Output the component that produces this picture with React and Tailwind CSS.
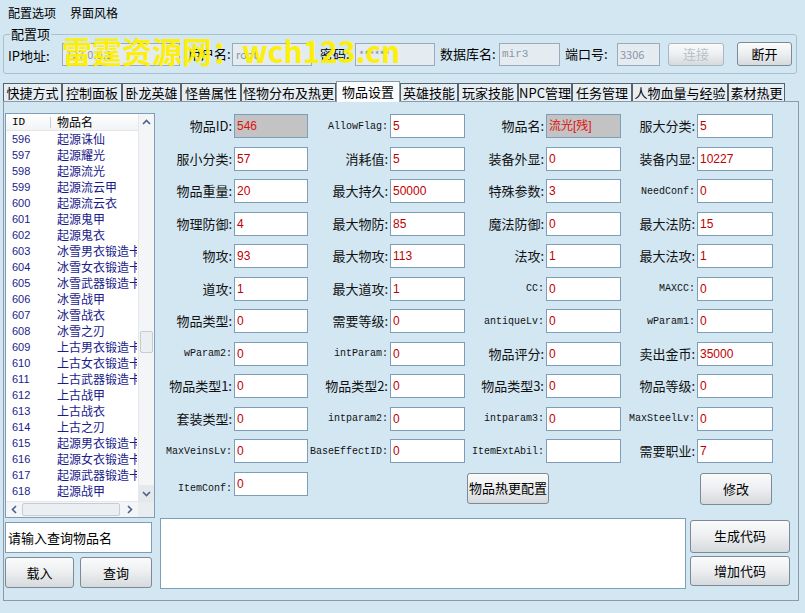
import React from 'react';

const cjk = "font-['Noto_Sans_CJK_SC','Noto_Sans',sans-serif]";
const mono = "font-['Liberation_Mono','Noto_Sans_CJK_SC',monospace]";

const tabs = [
    ['快捷方式', 59], ['控制面板', 60], ['卧龙英雄', 59], ['怪兽属性', 60], ['怪物分布及热更', 95],
    ['物品设置', 64], ['英雄技能', 58], ['玩家技能', 60], ['NPC管理', 54], ['任务管理', 60],
    ['人物血量与经验', 96], ['素材热更', 57],
];

const items = [
    ['596', '起源诛仙'], ['597', '起源耀光'], ['598', '起源流光'], ['599', '起源流云甲'], ['600', '起源流云衣'],
    ['601', '起源鬼甲'], ['602', '起源鬼衣'], ['603', '冰雪男衣锻造卡'], ['604', '冰雪女衣锻造卡'], ['605', '冰雪武器锻造卡'],
    ['606', '冰雪战甲'], ['607', '冰雪战衣'], ['608', '冰雪之刃'], ['609', '上古男衣锻造卡'], ['610', '上古女衣锻造卡'],
    ['611', '上古武器锻造卡'], ['612', '上古战甲'], ['613', '上古战衣'], ['614', '上古之刃'], ['615', '起源男衣锻造卡'],
    ['616', '起源女衣锻造卡'], ['617', '起源武器锻造卡'], ['618', '起源战甲'], ['619', '起源战衣'],
];

// [label, value, mono?, gray?]
const rows = [
    [['物品ID:', '546', 0, 1], ['AllowFlag:', '5', 1], ['物品名:', '流光[残]', 0, 1], ['服大分类:', '5']],
    [['服小分类:', '57'], ['消耗值:', '5'], ['装备外显:', '0'], ['装备内显:', '10227']],
    [['物品重量:', '20'], ['最大持久:', '50000'], ['特殊参数:', '3'], ['NeedConf:', '0', 1]],
    [['物理防御:', '4'], ['最大物防:', '85'], ['魔法防御:', '0'], ['最大法防:', '15']],
    [['物攻:', '93'], ['最大物攻:', '113'], ['法攻:', '1'], ['最大法攻:', '1']],
    [['道攻:', '1'], ['最大道攻:', '1'], ['CC:', '0', 1], ['MAXCC:', '0', 1]],
    [['物品类型:', '0'], ['需要等级:', '0'], ['antiqueLv:', '0', 1], ['wParam1:', '0', 1]],
    [['wParam2:', '0', 1], ['intParam:', '0', 1], ['物品评分:', '0'], ['卖出金币:', '35000']],
    [['物品类型1:', '0'], ['物品类型2:', '0'], ['物品类型3:', '0'], ['物品等级:', '0']],
    [['套装类型:', '0'], ['intparam2:', '0', 1], ['intparam3:', '0', 1], ['MaxSteelLv:', '0', 1]],
    [['MaxVeinsLv:', '0', 1], ['BaseEffectID:', '0', 1], ['ItemExtAbil:', '', 1], ['需要职业:', '7']],
];

const Btn = ({ children, className = '', disabled }) => (
    <button className={`rounded-[3px] border border-[#7b8a96] bg-gradient-to-b from-[#fbfbfb] via-[#eceef0] to-[#d6dadd] text-[13px] ${cjk} ${disabled ? 'text-[#b8c2ca] border-[#aab6c0]' : 'text-black'} ${className}`}>
        {children}
    </button>
);

const Field = ({ label, value, isMono, gray }) => (
    <>
        <div className={`flex items-center justify-end pr-[2px] text-[#111] whitespace-nowrap ${isMono ? `${mono} text-[10px]` : `${cjk} text-[13px]`}`}>{label}</div>
        <div className={`h-[24px] border border-[#7f9db9] flex items-center pl-[2px] text-[12px] text-[#c00000] font-['Liberation_Sans','Noto_Sans_CJK_SC',sans-serif] ${gray ? 'bg-[#c3c3c3] text-[#e01010]' : 'bg-white'}`}>{value}</div>
    </>
);

const Arrow = ({ d }) => (
    <svg width="9" height="9" viewBox="0 0 9 9"><path d={d} fill="none" stroke="#4d6185" strokeWidth="1.6" /></svg>
);

const App = () => {
    return (
        <div className={`relative w-[805px] h-[613px] overflow-hidden bg-[#d3e7f3] ${cjk}`}>
            {/* menu */}
            <div className="h-[25px] flex items-center gap-[14px] px-[8px] text-[12px] text-black">
                <span>配置选项</span>
                <span>界面风格</span>
            </div>

            {/* config group */}
            <div className="relative mx-[3px] mt-[9px] mr-[8px] h-[40px] border border-[#a9c0d0] rounded-[3px] flex items-center px-[4px] text-[13px] text-black">
                <span className="absolute left-[6px] top-[-11px] bg-[#d3e7f3] px-[1px] text-[13px]">配置项</span>
                <span className="w-[54px] mt-[3px]">IP地址:</span>
                <div className="w-[118px] h-[23px] border border-[#9aaab8] bg-[#e4ecf2] text-[11px] text-[#8a97a4] pl-[3px] flex items-center">127.0.0.1</div>
                <span className="ml-[8px] w-[44px]">用户名:</span>
                <div className="w-[80px] h-[23px] border border-[#9aaab8] bg-[#e4ecf2] text-[11px] text-[#8a97a4] pl-[3px] flex items-center">root</div>
                <span className="ml-[8px] w-[35px]">密码:</span>
                <div className="w-[80px] h-[23px] border border-[#9aaab8] bg-[#e4ecf2] text-[11px] text-[#8a97a4] pl-[3px] flex items-center">******</div>
                <span className="ml-[5px] w-[59px]">数据库名:</span>
                <div className={`w-[61px] h-[23px] border border-[#9aaab8] bg-[#e4ecf2] text-[11px] text-[#8a97a4] pl-[2px] flex items-center ${mono}`}>mir3</div>
                <span className="ml-[5px] w-[52px]">端口号:</span>
                <div className="w-[43px] h-[23px] border border-[#9aaab8] bg-[#e4ecf2] text-[11px] text-[#8a97a4] pl-[2px] flex items-center">3306</div>
                <Btn disabled className="ml-[8px] w-[56px] h-[23px]">连接</Btn>
                <Btn className="ml-[13px] w-[55px] h-[24px]">断开</Btn>
            </div>

            {/* tabs */}
            <div className="mt-[8px] ml-[3px] flex items-end h-[19px]">
                {tabs.map(([t, w]) => {
                    const sel = t === '物品设置';
                    return (
                        <div key={t} style={{ width: w }}
                            className={`flex items-center justify-center border border-b-0 text-[13px] text-black whitespace-nowrap ${sel ? 'h-[21px] bg-[#fbfcfd] border-[#8a9aa8] relative z-10 -mb-[1px]' : 'h-[18px] bg-[#e6eef4] border-[#56626c]'}`}>
                            {t}
                        </div>
                    );
                })}
            </div>

            {/* panel */}
            <div className="ml-[3px] mr-[6px] h-[500px] border border-[#8a9aa8] bg-[#d3e7f3] flex">
                {/* left column */}
                <div className="w-[152px] pl-[1px] pt-[11px] flex flex-col">
                    <div className="relative w-[150px] h-[405px] border border-[#7f9db9] bg-white overflow-hidden">
                        <div className="h-[17px] flex items-center text-[12px] text-black border-b border-[#e2e6ea] bg-gradient-to-b from-white to-[#f1f3f5]">
                            <span className={`w-[44px] shrink-0 pl-[6px] ${mono} text-[11px]`}>ID</span>
                            <span className="w-px h-[11px] bg-[#c8cdd2]" />
                            <span className="pl-[6px]">物品名</span>
                        </div>
                        <div className="w-[131px] overflow-hidden">
                            {items.map(([id, n]) => (
                                <div key={id} className="h-[16px] flex items-center text-[#1a1a8c] whitespace-nowrap">
                                    <span className="w-[51px] shrink-0 pl-[6px] text-[11px] font-['Liberation_Sans',sans-serif]">{id}</span>
                                    <span className="text-[12px]">{n}</span>
                                </div>
                            ))}
                        </div>
                        {/* vertical scrollbar */}
                        <div className="absolute right-0 top-0 w-[16px] h-[388px] bg-[#f3f5f7] border-l border-[#e4e8ec] flex flex-col items-center">
                            <div className="h-[17px] w-full flex items-center justify-center"><Arrow d="M1 6 L4.5 2.5 L8 6" /></div>
                            <div className="flex-1 w-full relative">
                                <div className="absolute left-[1px] right-[1px] top-[200px] h-[22px] rounded-[2px] border border-[#c5ccd3] bg-[#eceff2]" />
                            </div>
                            <div className="h-[17px] w-full flex items-center justify-center bg-[#e5e9ed]"><Arrow d="M1 3 L4.5 6.5 L8 3" /></div>
                        </div>
                        {/* horizontal scrollbar */}
                        <div className="absolute left-0 bottom-0 w-full h-[16px] bg-[#f3f5f7] border-t border-[#e4e8ec] flex items-center">
                            <div className="w-[16px] flex justify-center"><Arrow d="M6 1 L2.5 4.5 L6 8" /></div>
                            <div className="w-[98px] h-[13px] rounded-[2px] border border-[#c5ccd3] bg-[#eceff2]" />
                            <div className="flex-1 flex justify-center"><Arrow d="M3 1 L6.5 4.5 L3 8" /></div>
                            <div className="w-[16px] h-full bg-[#e9edf0]" />
                        </div>
                    </div>
                    <div className="mt-[4px] w-[147px] h-[31px] border border-[#7f9db9] bg-white flex items-center pl-[2px] text-[13px] text-black">请输入查询物品名</div>
                    <div className="mt-[4px] flex gap-[6px]">
                        <Btn className="w-[69px] h-[31px]">载入</Btn>
                        <Btn className="w-[72px] h-[31px]">查询</Btn>
                    </div>
                </div>

                {/* form */}
                <div className="flex-1 pt-[12px] pl-[4px] flex flex-col">
                    <div className="grid grid-cols-[74px_74px_82px_75px_81px_75px_76px_76px] gap-y-[8.5px]">
                        {rows.map((r, i) => r.map(([l, v, m, g], j) => (
                            <Field key={`${i}-${j}`} label={l} value={v} isMono={m} gray={g} />
                        )))}
                        <Field label="ItemConf:" value="0" isMono />
                        <div />
                        <div />
                        <div className="col-span-2 flex items-start pl-[2px]">
                            <Btn className="w-[82px] h-[31px] mt-[1px]">物品热更配置</Btn>
                        </div>
                        <div className="col-span-2 flex justify-end pr-[1px]">
                            <Btn className="w-[72px] h-[32px] mt-[1px]">修改</Btn>
                        </div>
                    </div>
                    <div className="mt-[13px] flex gap-[4px]">
                        <div className="w-[526px] h-[71px] border border-[#7f9db9] bg-white" />
                        <div className="flex flex-col gap-[3px] pt-[2px]">
                            <Btn className="w-[100px] h-[33px]">生成代码</Btn>
                            <Btn className="w-[100px] h-[30px]">增加代码</Btn>
                        </div>
                    </div>
                </div>
            </div>

            {/* watermark */}
            <div className="absolute left-[62px] top-[28px] text-[30px] font-bold text-[#fff000] whitespace-nowrap tracking-[0px] font-['Noto_Sans_CJK_SC',sans-serif] opacity-95">
                雷霆资源网：wch123.cn
            </div>
        </div>
    );
};

export default App;
